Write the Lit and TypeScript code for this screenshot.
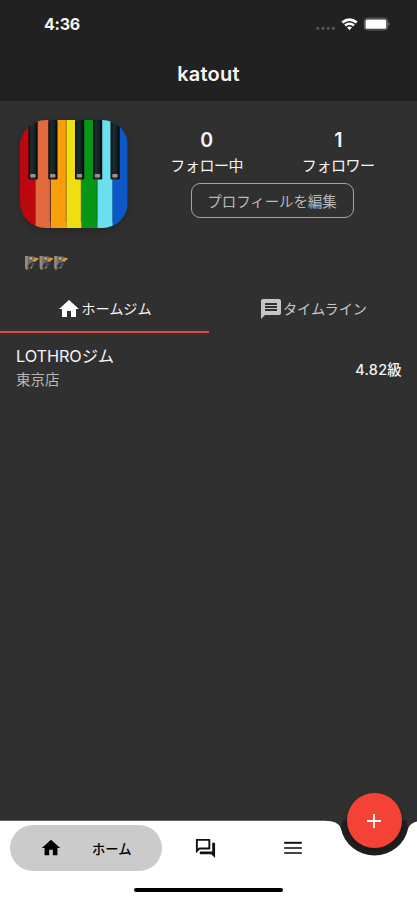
import { LitElement, html, svg, css } from "lit";
import { customElement } from "lit/decorators.js";

const whiteKeys = [
  { x: 0, w: 16, color: "#bd0710" },
  { x: 15.5, w: 15, color: "#e3693f" },
  { x: 31, w: 15.5, color: "#fb9e0c" },
  { x: 46.5, w: 15, color: "#efdf12" },
  { x: 62, w: 15.5, color: "#079618" },
  { x: 77.5, w: 15.5, color: "#69dff0" },
  { x: 92.5, w: 15.5, color: "#0c58c8" },
];
const blackKeys = [8.5, 28.3, 55, 73, 90.5];

@customElement("piano-avatar")
export class PianoAvatar extends LitElement {
  static styles = css`
    :host { display: block; width: 107.5px; height: 107.5px; border-radius: 26px; overflow: hidden; box-shadow: 0 3px 8px rgba(0, 0, 0, 0.22); }
    svg { display: block; }
  `;
  render() {
    return html`<svg width="108" height="108" viewBox="0 0 108 108">
      <defs><linearGradient id="ebony"><stop offset="0" stop-color="#050909"/><stop offset=".3" stop-color="#1b2e30"/><stop offset=".65" stop-color="#152224"/><stop offset="1" stop-color="#030506"/></linearGradient></defs>
      ${whiteKeys.map((k) => svg`<rect x=${k.x} y="0" width=${k.w} height="108" fill=${k.color}/><path d="M${k.x + k.w - 0.3} 0V102" stroke="#000" stroke-opacity=".35" stroke-width="1"/>`)}
      ${blackKeys.map((x) => svg`<rect x=${x} y="0" width="9.2" height="59.5" rx="1" fill="url(#ebony)"/><rect x=${x + 1.7} y="54" width="5.5" height="3.5" rx="1" fill="#a58c8b"/>`)}
    </svg>`;
  }
}

@customElement("app-root")
export class AppRoot extends LitElement {
  static styles = css`
    :host { display: flex; flex-direction: column; position: relative; width: 417px; height: 900px; overflow: hidden; background: #303030; color: #f5f5f5; font-family: Inter, "Noto Sans CJK JP", sans-serif; }
    * { box-sizing: border-box; }
    svg { display: block; flex: none; }
    .top { height: 101px; background: #212121; flex: none; }
    .status { height: 48px; padding: 0 27px 0 44px; display: flex; align-items: center; justify-content: space-between; }
    .time { font-size: 16px; font-weight: 700; letter-spacing: -0.25px; }
    .title { margin: 0; height: 52px; display: flex; align-items: center; justify-content: center; font-size: 20px; font-weight: 600; letter-spacing: 0.2px; }
    .profile { display: flex; height: 151px; padding: 19px 0 0 20px; }
    .details { width: 263px; margin-left: 13.5px; }
    .counts { display: grid; grid-template-columns: 1fr 1fr; height: 64px; text-align: center; }
    .number { font-size: 19.5px; line-height: 24px; font-weight: 600; margin-top: 8px; }
    .label { font-size: 15px; line-height: 20px; margin-top: 4px; letter-spacing: -0.45px; white-space: nowrap; font-weight: 400; }
    .edit { display: flex; align-items: center; justify-content: center; width: 163px; height: 35px; margin: -1px 0 0 49.5px; padding: 0; border: 1px solid #a4a4a4; border-radius: 9px; background: none; color: #b9b9b9; font: 400 14.5px Inter, "Noto Sans CJK JP", sans-serif; letter-spacing: -0.1px; white-space: nowrap; }
    .bio { height: 33px; padding: 3px 0 0 24px; }
    .tabs { display: grid; grid-template-columns: 209px 208px; height: 48px; flex: none; }
    .tab { display: flex; align-items: center; justify-content: center; font-size: 14.2px; }
    .tab span { position: relative; top: -1px; }
    .tab.on { border-bottom: 2px solid #dc4b42; padding-top: 2px; }
    .tab.off { color: #c6c6c6; }
    .gym { display: flex; justify-content: space-between; align-items: center; padding: 12px 15px 0 16px; }
    .name { font-size: 16.3px; line-height: 23px; letter-spacing: -0.1px; }
    .branch { font-size: 14.5px; line-height: 22px; color: #b7b7b7; margin-top: 1px; }
    .grade { font-size: 14.4px; font-weight: 500; letter-spacing: 0.3px; }
    .bar { position: absolute; left: 0; bottom: 0; width: 417px; height: 80px; }
    .surface { position: absolute; inset: 0; }
    .nav { position: relative; display: flex; align-items: center; height: 46px; margin: 5px 0 0 10px; color: #000; }
    .pill { display: flex; align-items: center; width: 152px; height: 46px; padding-left: 30px; border-radius: 23px; background: #cbcbcb; font-size: 13.3px; font-weight: 500; gap: 30px; }
    .chat { margin-left: 32px; }
    .menu { margin-left: 65px; }
    .indicator { position: relative; width: 149px; height: 4px; margin: 17px auto 0; border-radius: 2px; background: #000; }
    .fab { position: absolute; left: 346.5px; top: 793px; width: 55px; height: 55px; padding: 0; border: 0; border-radius: 50%; background: #f44336; display: grid; place-items: center; box-shadow: 0 3px 5px rgba(0, 0, 0, 0.3); }
  `;

  render() {
    return html`
      <header class="top">
        <div class="status">
          <span class="time">4:36</span>
          <svg width="75" height="20" viewBox="0 0 75 20">
            <g fill="#555"><circle cx="2.8" cy="14.3" r="1.6"/><circle cx="8" cy="14.3" r="1.6"/><circle cx="13.2" cy="14.3" r="1.6"/><circle cx="18.4" cy="14.3" r="1.6"/></g>
            <path d="M26.3 7.400Q34.500 .9 42.700 7.400L40.800 9.500Q34.500 4.500 28.200 9.500ZM29.200 10.500Q34.500 6.400 39.800 10.500L38 12.400Q34.500 9.800 31 12.400ZM32 13.300Q34.500 11.600 37 13.300L34.500 16.200Z" fill="#fff"/>
            <rect x="49.3" y="4.2" width="23.200" height="11.700" rx="3" fill="none" stroke="#6a6a6a" stroke-width="1"/>
            <rect x="50.500" y="5.400" width="20.800" height="9.300" rx="1.5" fill="#fff"/><path d="M73.500 8.200Q76 10 73.500 12Z" fill="#777"/>
          </svg>
        </div>
        <h1 class="title">katout</h1>
      </header>
      <section class="profile">
        <piano-avatar></piano-avatar>
        <div class="details">
          <div class="counts">
            <div><div class="number">0</div><div class="label">フォロー中</div></div>
            <div><div class="number">1</div><div class="label">フォロワー</div></div>
          </div>
          <button class="edit">プロフィールを編集</button>
        </div>
      </section>
      <div class="bio">
        <svg width="46" height="17" viewBox="0 0 46 17">
          ${[1, 15.6, 30.2].map((x) => svg`<g transform=${`translate(${x} 0)`}>
            <path d="M0 1L9 1.500L12 4L8 7L5 8L3 11L4 14L1 15Z" fill="#756b60"/>
            <path d="M0 1H3L2 15L0 13Z" fill="#938b80"/>
            <path d="M4 4L8 3L9 7L6 8Z" fill="#596069"/>
            <path d="M7 5.500L11 2.500L14 3.500L10 7Z" fill="#d79a3b"/>
            <path d="M7 8L10 8.500L8 11.500L6 10.500Z" fill="#3c5788"/>
            <path d="M5 12L8 11.500L6 14Z" fill="#c6924a"/>
            <circle cx="6" cy="3.5" r="1.3" fill="#cdb084"/>
          </g>`)}
        </svg>
      </div>
      <nav class="tabs">
        <div class="tab on"><svg width="24" height="24" viewBox="0 0 24 24" fill="#fff"><path d="M10 20v-6h4v6h5v-8h3L12 3 2 12h3v8z"/></svg><span>ホームジム</span></div>
        <div class="tab off"><svg width="24" height="24" viewBox="0 0 24 24" fill="#c6c6c6"><path d="M20 2H4c-1.100 0-1.990.9-1.990 2L2 22l4-4h14c1.100 0 2-.9 2-2V4c0-1.100-.9-2-2-2zM18 14H6v-2h12v2zm0-3H6V9h12v2zm0-3H6V6h12v2z"/></svg><span>タイムライン</span></div>
      </nav>
      <main class="gym">
        <div><div class="name">LOTHROジム</div><div class="branch">東京店</div></div>
        <div class="grade">4.82級</div>
      </main>
      <footer class="bar">
        <svg class="surface" width="417" height="80" viewBox="0 0 417 80">
          <path d="M343 0H406L408.300 8A34.500 34.500 0 0 1 340.700 8Z" fill="#212121"/>
          <path d="M0 .8H325Q338 .8 340.700 8A34.500 34.500 0 0 0 408.300 8Q411 .8 424 .8V80H0Z" fill="#fff"/>
        </svg>
        <div class="nav">
          <div class="pill"><svg width="22" height="22" viewBox="0 0 24 24"><path d="M10 20v-6h4v6h5v-8h3L12 3 2 12h3v8z"/></svg>ホーム</div>
          <svg class="chat" width="23" height="23" viewBox="0 0 24 24"><path d="M15 4v7H5.170L4 12.170V4h11m1-2H3c-.55 0-1 .45-1 1v14l4-4h10c.55 0 1-.45 1-1V3c0-.55-.45-1-1-1zm5 4h-2v9H6v2c0 .55.45 1 1 1h11l4 4V7c0-.55-.45-1-1-1z" fill="#111"/></svg>
          <svg class="menu" width="22" height="22" viewBox="0 0 22 22"><path d="M2.200 4.800H19.800V6.800H2.200Z" fill="#111"/><path d="M2.200 10H19.800V12H2.200ZM2.200 15H19.800V17H2.200Z" fill="#444"/></svg>
        </div>
        <div class="indicator"></div>
      </footer>
      <button class="fab" aria-label="Add"><svg width="24" height="24" viewBox="0 0 24 24"><path d="M19 12.900h-6.100V19h-1.800v-6.100H5v-1.800h6.100V5h1.800v6.100H19z" fill="#fff"/></svg></button>
    `;
  }
}
